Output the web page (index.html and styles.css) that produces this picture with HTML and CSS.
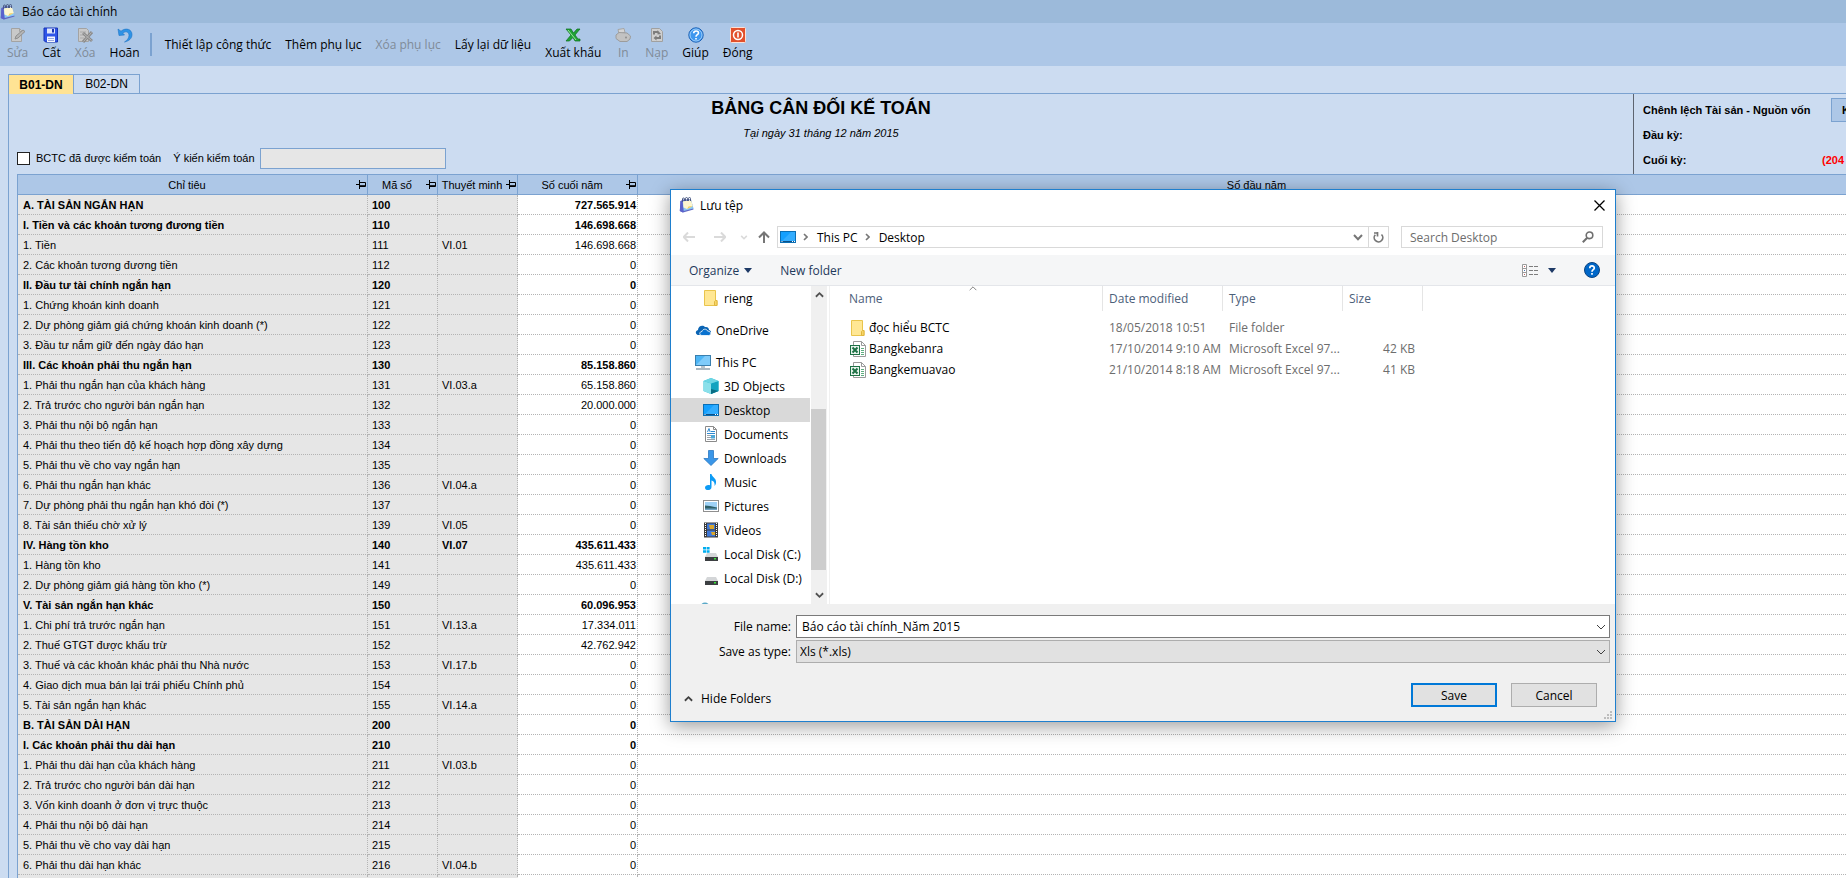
FILE: index.html
```html
<!DOCTYPE html>
<html lang="vi">
<head>
  <meta charset="UTF-8">
  <meta name="viewport" content="width=device-width, initial-scale=1.0">
  <title>Báo cáo tài chính</title>
  <link rel="stylesheet" href="styles.css">
</head>
<body>
  <!-- shared icons -->
  <svg class="sprite" aria-hidden="true">
    <symbol id="i-app" viewBox="0 0 16 16">
      <path d="M1.500 4 4 2.500 12 2.500 14.500 12.500 4 15.500 .8 14z" fill="#5f66c4"/>
      <path d="M3.500 4.500 12 3 14.500 11.500 4.500 14z" fill="#8cc8f2"/>
      <path d="M4 4.500 12 3 13.800 9 8 12 4.500 10.500z" fill="#fdf6cf"/>
      <path d="M9.500 9.500 13.800 9 8 12z" fill="#f3cf55"/>
      <path d="M1.500 4 3.500 4.500 4.500 14 4 15.500 .8 14z" fill="#5a62cc"/>
      <path d="M3.500 5V2a1 1 0 0 1 2 0V4M6.500 4V1.500a1 1 0 0 1 2 0V4M9.500 4V1.500a1 1 0 0 1 2 0V4" fill="none" stroke="#4b5b84"/>
    </symbol>
    <symbol id="i-pin" viewBox="0 0 10 9">
      <path d="M0 4.500h3M3.500 0v9M4 2.500h5.500v4H4M4 5.700h5" fill="none" stroke="#000"/>
    </symbol>
    <symbol id="i-folder" viewBox="0 0 14 16">
      <path d="M.5 .5h11v10h1.500v5H.5z" fill="#ffe794" stroke="#e9c44c"/>
      <path d="M10.500 15.500v-4l1-1h1.500v5z" fill="#f7d667" stroke="#e0b63e"/>
    </symbol>
    <symbol id="i-desktop" viewBox="0 0 16 12">
      <rect x=".5" y=".5" width="15" height="11" fill="#14a0ff" stroke="#0b6fb5"/>
      <path d="M1 11 11 1h4v9H1z" fill="#33adff"/>
      <path d="M1 10.500h14" stroke="#0b4f86"/>
      <path d="M1.500 10.500h1M12 10.500h1M14 10.500h1" stroke="#fff"/>
    </symbol>
    <symbol id="i-excel" viewBox="0 0 16 16">
      <path d="M3.500 .5h8l4 4v11h-12z" fill="#fff" stroke="#9a9a9a"/>
      <path d="M11.500 .5v4h4" fill="none" stroke="#9a9a9a"/>
      <path d="M11 7.500h3M11 9.500h3M11 11.500h3M11 13.500h3" stroke="#5fae80"/>
      <rect x=".5" y="4.500" width="9" height="9" fill="#e9f4ed" stroke="#1e7145"/>
      <path d="M2.500 6.500 7.500 11.500M7.500 6.500 2.500 11.500" stroke="#1e7145" stroke-width="2"/>
    </symbol>
    <symbol id="i-chevron" viewBox="0 0 10 6">
      <path d="M1 1 5 5 9 1" fill="none" stroke="currentColor"/>
    </symbol>
    <symbol id="i-arrow" viewBox="0 0 12 10">
      <path d="M0.500 5H12M5 .5.7 5 5 9.500" fill="none" stroke="currentColor" stroke-width="2"/>
    </symbol>
    <symbol id="i-disk" viewBox="0 0 16 16">
      <path d="M4 7h9l2 4H2z" fill="#d4d6d8"/>
      <rect x="2" y="11" width="13" height="4" fill="#3c3f42"/>
      <rect x="11" y="12" width="2" height="1.500" fill="#39e639"/>
    </symbol>
  </svg>

  <div class="app">
    <header class="titlebar">
      <svg class="icon16"><use href="#i-app"/></svg>
      <h1>Báo cáo tài chính</h1>
    </header>

    <div class="toolbar">
      <button class="tool" disabled>
        <svg viewBox="0 0 16 16"><path d="M1.500 1.500h8l2 2v11h-10z" fill="#c9c9c9" stroke="#a3a3a3"/><path d="M9.500 1.500v3h3" fill="none" stroke="#a3a3a3"/><path d="M5 12l1-3 7-6 2 1.500-7 6.500z" fill="#b4b4b4" stroke="#8f8f8f"/></svg>
        Sửa
      </button>
      <button class="tool">
        <svg viewBox="0 0 16 16"><path d="M1 1h13.500v14H2.500L1 13.500z" fill="#2f55e8" stroke="#1733b4"/><path d="M4 1.500h8v5H4z" fill="#dfe6fb"/><path d="M9 2h2v3.500H9z" fill="#1733b4"/><path d="M4 9.500h8V15H4z" fill="#f4f6fd"/><path d="M5 11.500h6M5 13.500h6" stroke="#9aa9dd"/></svg>
        Cất
      </button>
      <button class="tool" disabled>
        <svg viewBox="0 0 16 16"><path d="M1.500 1.500h8l2 2v11h-10z" fill="#c9c9c9" stroke="#a3a3a3"/><path d="M3 5h6M3 8h5M3 11h4" stroke="#a9a9a9"/><path d="M6 6 15 14M15 5 6 15" stroke="#8a8a8a" stroke-width="3"/><path d="M6.500 6.500 14.500 13.500M14.500 5.500 6.500 14.500" stroke="#b5b5b5"/></svg>
        Xóa
      </button>
      <button class="tool">
        <svg viewBox="0 0 16 16"><path d="M1 2 2 8.500 7.500 8 5.800 6.200C9 3.500 12 5 12 8.500 12 11 10 13.500 7.500 15 12 14 15 11.500 15 7.500 15 2.500 9 0 4 4.200z" fill="#2f93e6" stroke="#1f74c4" stroke-width=".6"/></svg>
        Hoãn
      </button>
      <span class="tool-sep"></span>
      <button class="tool">Thiết lập công thức</button>
      <button class="tool">Thêm phụ lục</button>
      <button class="tool" disabled>Xóa phụ lục</button>
      <button class="tool">Lấy lại dữ liệu</button>
      <button class="tool">
        <svg viewBox="0 0 16 16"><path d="M1 2h5l2.500 4L12 2h3l-5 6 3 4h2v2h-5L8 10.500 4.500 14H1l5-6z" fill="#1fa336" stroke="#0d6f1e" stroke-width=".7"/><path d="M3 3l8 10" stroke="#9be59b"/></svg>
        Xuất khẩu
      </button>
      <button class="tool" disabled>
        <svg viewBox="0 0 16 16"><path d="M3 2.500 9 1.500l1 4-6 1.500z" fill="#d4d4d4" stroke="#a5a5a5"/><path d="M1 8l3-2.500 8 .5 3.500 3-.5 3-3 2.500H5L1 11.500z" fill="#c2c2c2" stroke="#9c9c9c"/><circle cx="11" cy="10.500" r="1" fill="#8e8e8e"/></svg>
        In
      </button>
      <button class="tool" disabled>
        <svg viewBox="0 0 16 16"><path d="M2.500 1.500h8l3 3v10h-11z" fill="#cfcfcf" stroke="#a0a0a0"/><path d="M5 7.500V5h4M11 8.500V11H7" fill="none" stroke="#7d7d7d" stroke-width="2"/><path d="M8.500 3v4.500L12 7zM7.500 8.500v5L4.500 11z" fill="#7d7d7d"/></svg>
        Nạp
      </button>
      <button class="tool">
        <svg viewBox="0 0 16 16"><circle cx="8" cy="8" r="7.200" fill="#3f97ee" stroke="#1d62b6"/><circle cx="8" cy="8" r="6" fill="none" stroke="#b4dafc" stroke-width=".8"/><path d="M5.700 6.300c0-3.200 4.800-3 4.800-.3C10.500 7.700 8 7.700 8 9.700M8 11v1.600" fill="none" stroke="#fff" stroke-width="1.600"/></svg>
        Giúp
      </button>
      <button class="tool">
        <svg viewBox="0 0 16 16"><rect x=".5" y=".5" width="15" height="15" rx="1" fill="#e2502c" stroke="#fbe0d6"/><circle cx="8" cy="8" r="4.500" fill="none" stroke="#fff" stroke-width="1.500"/><path d="M8 5.500v5" stroke="#fff" stroke-width="1.600"/></svg>
        Đóng
      </button>
    </div>

    <div class="tabs">
      <button class="tab active">B01-DN</button>
      <button class="tab">B02-DN</button>
    </div>

    <main class="panel">
      <section class="report-head">
        <div class="report-main">
          <h2>BẢNG CÂN ĐỐI KẾ TOÁN</h2>
          <p class="report-date">Tại ngày 31 tháng 12 năm 2015</p>
          <div class="audit">
            <input type="checkbox" id="audited">
            <label for="audited" class="audit-check">BCTC đã được kiểm toán</label>
            <label for="opinion">Ý kiến kiểm toán</label>
            <input type="text" id="opinion" class="opinion">
          </div>
        </div>
        <div class="balance">
          <div class="balance-row"><span>Chênh lệch Tài sản - Nguồn vốn</span><button class="check-btn">K</button></div>
          <div class="balance-row"><span>Đầu kỳ:</span></div>
          <div class="balance-row"><span>Cuối kỳ:</span><span class="negative">(204</span></div>
        </div>
      </section>

      <table class="grid">
        <colgroup><col class="c-name"><col class="c-code"><col class="c-note"><col class="c-end"><col></colgroup>
        <thead>
          <tr>
            <th><div class="th"><span>Chỉ tiêu</span><svg class="pin"><use href="#i-pin"/></svg></div></th>
            <th><div class="th"><span>Mã số</span><svg class="pin"><use href="#i-pin"/></svg></div></th>
            <th><div class="th"><span>Thuyết minh</span><svg class="pin"><use href="#i-pin"/></svg></div></th>
            <th><div class="th"><span>Số cuối năm</span><svg class="pin"><use href="#i-pin"/></svg></div></th>
            <th>Số đầu năm</th>
          </tr>
        </thead>
        <tbody>
          <tr class="group"><td>A. TÀI SẢN NGẮN HẠN</td><td>100</td><td></td><td>727.565.914</td><td></td></tr>
          <tr class="group"><td>I. Tiền và các khoản tương đương tiền</td><td>110</td><td></td><td>146.698.668</td><td></td></tr>
          <tr><td>1. Tiền</td><td>111</td><td>VI.01</td><td>146.698.668</td><td></td></tr>
          <tr><td>2. Các khoản tương đương tiền</td><td>112</td><td></td><td>0</td><td></td></tr>
          <tr class="group"><td>II. Đầu tư tài chính ngắn hạn</td><td>120</td><td></td><td>0</td><td></td></tr>
          <tr><td>1. Chứng khoán kinh doanh</td><td>121</td><td></td><td>0</td><td></td></tr>
          <tr><td>2. Dự phòng giảm giá chứng khoán kinh doanh (*)</td><td>122</td><td></td><td>0</td><td></td></tr>
          <tr><td>3. Đầu tư nắm giữ đến ngày đáo hạn</td><td>123</td><td></td><td>0</td><td></td></tr>
          <tr class="group"><td>III. Các khoản phải thu ngắn hạn</td><td>130</td><td></td><td>85.158.860</td><td></td></tr>
          <tr><td>1. Phải thu ngắn hạn của khách hàng</td><td>131</td><td>VI.03.a</td><td>65.158.860</td><td></td></tr>
          <tr><td>2. Trả trước cho người bán ngắn hạn</td><td>132</td><td></td><td>20.000.000</td><td></td></tr>
          <tr><td>3. Phải thu nội bộ ngắn hạn</td><td>133</td><td></td><td>0</td><td></td></tr>
          <tr><td>4. Phải thu theo tiến độ kế hoạch hợp đồng xây dựng</td><td>134</td><td></td><td>0</td><td></td></tr>
          <tr><td>5. Phải thu về cho vay ngắn hạn</td><td>135</td><td></td><td>0</td><td></td></tr>
          <tr><td>6. Phải thu ngắn hạn khác</td><td>136</td><td>VI.04.a</td><td>0</td><td></td></tr>
          <tr><td>7. Dự phòng phải thu ngắn hạn khó đòi (*)</td><td>137</td><td></td><td>0</td><td></td></tr>
          <tr><td>8. Tài sản thiếu chờ xử lý</td><td>139</td><td>VI.05</td><td>0</td><td></td></tr>
          <tr class="group"><td>IV. Hàng tồn kho</td><td>140</td><td>VI.07</td><td>435.611.433</td><td></td></tr>
          <tr><td>1. Hàng tồn kho</td><td>141</td><td></td><td>435.611.433</td><td></td></tr>
          <tr><td>2. Dự phòng giảm giá hàng tồn kho (*)</td><td>149</td><td></td><td>0</td><td></td></tr>
          <tr class="group"><td>V. Tài sản ngắn hạn khác</td><td>150</td><td></td><td>60.096.953</td><td></td></tr>
          <tr><td>1. Chi phí trả trước ngắn hạn</td><td>151</td><td>VI.13.a</td><td>17.334.011</td><td></td></tr>
          <tr><td>2. Thuế GTGT được khấu trừ</td><td>152</td><td></td><td>42.762.942</td><td></td></tr>
          <tr><td>3. Thuế và các khoản khác phải thu Nhà nước</td><td>153</td><td>VI.17.b</td><td>0</td><td></td></tr>
          <tr><td>4. Giao dịch mua bán lại trái phiếu Chính phủ</td><td>154</td><td></td><td>0</td><td></td></tr>
          <tr><td>5. Tài sản ngắn hạn khác</td><td>155</td><td>VI.14.a</td><td>0</td><td></td></tr>
          <tr class="group"><td>B. TÀI SẢN DÀI HẠN</td><td>200</td><td></td><td>0</td><td></td></tr>
          <tr class="group"><td>I. Các khoản phải thu dài hạn</td><td>210</td><td></td><td>0</td><td></td></tr>
          <tr><td>1. Phải thu dài hạn của khách hàng</td><td>211</td><td>VI.03.b</td><td>0</td><td></td></tr>
          <tr><td>2. Trả trước cho người bán dài hạn</td><td>212</td><td></td><td>0</td><td></td></tr>
          <tr><td>3. Vốn kinh doanh ở đơn vị trực thuộc</td><td>213</td><td></td><td>0</td><td></td></tr>
          <tr><td>4. Phải thu nội bộ dài hạn</td><td>214</td><td></td><td>0</td><td></td></tr>
          <tr><td>5. Phải thu về cho vay dài hạn</td><td>215</td><td></td><td>0</td><td></td></tr>
          <tr><td>6. Phải thu dài hạn khác</td><td>216</td><td>VI.04.b</td><td>0</td><td></td></tr>
          <tr><td></td><td></td><td></td><td></td><td></td></tr>
        </tbody>
      </table>
    </main>
  </div>

  <div class="dialog" role="dialog" aria-labelledby="dialogTitle">
    <div class="dialog-title">
      <svg class="icon16"><use href="#i-app"/></svg>
      <h2 id="dialogTitle">Lưu tệp</h2>
      <button class="close" aria-label="Close"><svg viewBox="0 0 11 11"><path d="M.5.5l10 10M10.500.5l-10 10" stroke="#000" stroke-width="1.300" fill="none"/></svg></button>
    </div>

    <div class="nav">
      <div class="nav-buttons">
        <button class="nav-btn dim" aria-label="Back"><svg class="arrow"><use href="#i-arrow"/></svg></button>
        <button class="nav-btn dim" aria-label="Forward"><svg class="arrow flip"><use href="#i-arrow"/></svg></button>
        <button class="nav-btn dim" aria-label="Recent"><svg viewBox="0 0 10 6" class="recent"><path d="M1.500 1 5 4.500 8.500 1" fill="none" stroke="currentColor" stroke-width="2"/></svg></button>
        <button class="nav-btn" aria-label="Up"><svg viewBox="0 0 12 12"><path d="M6 12V1.500M1 6.500 6 1.500l5 5" fill="none" stroke="#767676" stroke-width="2"/></svg></button>
      </div>
      <div class="address">
        <svg class="desktop"><use href="#i-desktop"/></svg>
        <svg class="crumb" viewBox="0 0 5 8"><path d="M1 1l3 3-3 3" fill="none" stroke="#777" stroke-width="1.600"/></svg>
        <a href="#">This PC</a>
        <svg class="crumb" viewBox="0 0 5 8"><path d="M1 1l3 3-3 3" fill="none" stroke="#777" stroke-width="1.600"/></svg>
        <a href="#">Desktop</a>
        <button class="addr-btn addr-drop" aria-label="Previous locations"><svg viewBox="0 0 10 7"><path d="M1 1 5 5.200 9 1" fill="none" stroke="#767676" stroke-width="2"/></svg></button>
        <button class="addr-btn refresh" aria-label="Refresh"><svg viewBox="0 0 11 11"><path d="M8.500 2.500A4.300 4.300 0 1 1 2.300 2.700" fill="none" stroke="#767676" stroke-width="1.700"/><path d="M4.500 0v4.500M4.800 1H1" fill="none" stroke="#767676" stroke-width="1.700"/></svg></button>
      </div>
      <div class="search">
        <input type="text" placeholder="Search Desktop" aria-label="Search Desktop">
        <svg viewBox="0 0 12 12"><circle cx="7.500" cy="4.300" r="3.300" fill="none" stroke="#6f6f6f" stroke-width="1.600"/><path d="M5.200 6.800.8 11.200" stroke="#6f6f6f" stroke-width="2"/></svg>
      </div>
    </div>

    <div class="commands">
      <button>Organize <svg class="caret" viewBox="0 0 8 5"><path d="M0 0h8L4 5z" fill="#1e3a66"/></svg></button>
      <button>New folder</button>
      <button class="view" aria-label="View"><svg class="view-icon" viewBox="0 0 17 13"><path d="M.5.5h4v12h-4zM.5 4.500h4M.5 8.500h4" fill="#fff" stroke="#9a9a9a"/><path d="M7 2.500h4M12 2.500h4M7 6.500h4M12 6.500h4M7 10.500h4M12 10.500h4" stroke="#7d7d7d"/><path d="M2 2.500h1M2 10.500h1" stroke="#c06060"/><path d="M2 6.500h1" stroke="#4a78b8"/></svg><svg class="caret" viewBox="0 0 8 5"><path d="M0 0h8L4 5z" fill="#1e3a66"/></svg></button>
      <button class="help" aria-label="Help"><svg viewBox="0 0 16 16"><circle cx="8" cy="8" r="7.500" fill="#0067c8" stroke="#0b4380"/><path d="M5.800 6.200c0-3 4.500-2.900 4.500-.2C10.300 7.700 8 7.700 8 9.700M8 11v1.700" fill="none" stroke="#fff" stroke-width="1.700"/></svg></button>
    </div>

    <div class="browser">
      <ul class="tree">
        <li class="child"><svg viewBox="0 0 14 16"><use href="#i-folder"/></svg>rieng</li>
        <li class="root"><svg viewBox="0 0 16 16"><path d="M4 13C.5 13-.5 9 3 8c0-4 5-5.500 7-3 3-.5 4 1.500 4 3 3 .5 2.500 5 0 5z" fill="#0a64b4"/><path d="M7 13.500c-3 0-3-4 0-4 .5-3 5-3 5.500-.5 4 0 4 4.500 1 4.500z" fill="#0a72cf" stroke="#fff" stroke-width=".8"/></svg>OneDrive</li>
        <li class="root"><svg viewBox="0 0 16 16"><rect x=".5" y="1.500" width="15" height="10" fill="#4db5f5" stroke="#3a7fae"/><path d="M1 11 10 2h5v9z" fill="#7fcbfa"/><path d="M6 12h4v2H6z" fill="#b9c3cb"/><path d="M1 15h14" stroke="#8fa0ad" stroke-width="1.500"/></svg>This PC</li>
        <li class="child"><svg viewBox="0 0 16 16"><path d="M8 0l7.500 3v10L8 16 .5 13V3z" fill="#2fc0d6"/><path d="M.5 3 8 5.500V16L.5 13z" fill="#8be0ea"/><path d="M8 5.500 15.500 3v10L8 16z" fill="#12a3bf"/><path d="M8 11l7.500 2L8 16z" fill="#0a6d84"/><path d="M8 0l7.500 3L8 5.500.5 3z" fill="#6fd6e4"/></svg>3D Objects</li>
        <li class="child selected"><svg viewBox="0 0 16 12"><use href="#i-desktop"/></svg>Desktop</li>
        <li class="child"><svg viewBox="0 0 16 16"><path d="M2.500.5h8l3 3v12h-11z" fill="#fff" stroke="#8a8a8a"/><path d="M10.500.5v3h3" fill="none" stroke="#8a8a8a"/><path d="M4.500 6 6 2.500 7.200 6M4 7.500h8M8 5.500h4" fill="none" stroke="#2f88cf"/><path d="M4 9.500h4M4 11.500h4M4 13.500h8" stroke="#9aa4ac"/><path d="M8 9h4v3.500H8z" fill="#4da7d8"/></svg>Documents</li>
        <li class="child"><svg viewBox="0 0 16 16"><path d="M5.500.5h5v8h4.700L8 15.500.8 8.500h4.700z" fill="#3a96e8" stroke="#2b78c2" stroke-width=".8"/></svg>Downloads</li>
        <li class="child"><svg viewBox="0 0 16 16"><path d="M7 0h1.500c.3 3 5 4 4.500 8.500 0 1.500-.7 2.500-1.500 3.500.5-3.500-.8-5-3-5.500V13c0 4-6.500 4-6.500.8C2 11 5 10.500 7 11.200z" fill="#0d9bf5"/></svg>Music</li>
        <li class="child"><svg viewBox="0 0 16 16"><rect x=".5" y="2.500" width="15" height="11" fill="#fff" stroke="#8f8f8f"/><path d="M2 4h12v8H2z" fill="#9fd2f6"/><path d="M2 7.500 7 8l7 1.500V12H2z" fill="#2e6069"/><path d="M2 10.500h12V12H2z" fill="#6fa3c4"/></svg>Pictures</li>
        <li class="child"><svg viewBox="0 0 16 16"><rect x="1" y=".5" width="14" height="15" fill="#3b3b3b"/><path d="M4 1.500h8v6H4zM4 8.500h8v6H4z" fill="#3f78d8"/><path d="M6 3h5v4H7zM8 10h4v3H9z" fill="#d9a62c"/><path d="M2.500 1v14M13.500 1v14" stroke="#fff" stroke-dasharray="1 1"/></svg>Videos</li>
        <li class="child"><svg viewBox="0 0 16 16"><use href="#i-disk"/><path d="M0 1h3v2.500H0zM3.600 1h3v2.500h-3zM0 4.200h3v2.500H0zM3.600 4.200h3v2.500h-3z" fill="#00adef"/></svg>Local Disk (C:)</li>
        <li class="child"><svg viewBox="0 0 16 16"><use href="#i-disk"/></svg>Local Disk (D:)</li>
        <li class="root"><svg viewBox="0 0 16 16"><circle cx="10" cy="5" r="4.500" fill="#5aa9c8"/></svg></li>
      </ul>
      <div class="scrollbar">
        <svg viewBox="0 0 10 7"><path d="M1 6 5 2 9 6" fill="none" stroke="#505050" stroke-width="2"/></svg>
        <div class="thumb"></div>
        <svg viewBox="0 0 10 7"><path d="M1 1 5 5 9 1" fill="none" stroke="#505050" stroke-width="2"/></svg>
      </div>
      <div class="files">
        <svg class="sort flip"><use href="#i-chevron"/></svg>
        <table>
          <colgroup><col class="f-name"><col class="f-date"><col class="f-type"><col class="f-size"></colgroup>
          <thead><tr><th>Name</th><th>Date modified</th><th>Type</th><th>Size</th></tr></thead>
          <tbody>
            <tr><td><div class="file"><svg><use href="#i-folder"/></svg>đọc hiểu BCTC</div></td><td>18/05/2018 10:51</td><td>File folder</td><td></td></tr>
            <tr><td><div class="file"><svg><use href="#i-excel"/></svg>Bangkebanra</div></td><td>17/10/2014 9:10 AM</td><td>Microsoft Excel 97...</td><td>42 KB</td></tr>
            <tr><td><div class="file"><svg><use href="#i-excel"/></svg>Bangkemuavao</div></td><td>21/10/2014 8:18 AM</td><td>Microsoft Excel 97...</td><td>41 KB</td></tr>
          </tbody>
        </table>
      </div>
    </div>

    <div class="dialog-foot">
      <div class="field">
        <label for="fileName">File name:</label>
        <div class="combo">
          <input type="text" id="fileName" value="Báo cáo tài chính_Năm 2015">
          <svg><use href="#i-chevron"/></svg>
        </div>
      </div>
      <div class="field">
        <label for="fileType">Save as type:</label>
        <div class="combo">
          <select id="fileType"><option>Xls (*.xls)</option></select>
          <svg><use href="#i-chevron"/></svg>
        </div>
      </div>
      <div class="actions">
        <button class="hide-folders"><svg viewBox="0 0 10 7"><path d="M1 6 5 2 9 6" fill="none" stroke="#404040" stroke-width="2"/></svg>Hide Folders</button>
        <button class="btn primary">Save</button>
        <button class="btn">Cancel</button>
      </div>
    </div>
    <svg class="grip" viewBox="0 0 8 8"><path d="M6 0h2v2H6zM3 3h2v2H3zM6 3h2v2H6zM0 6h2v2H0zM3 6h2v2H3zM6 6h2v2H6z" fill="#bdbdbd"/></svg>
  </div>
</body>
</html>
```
FILE: styles.css
```css
* {
  box-sizing: border-box;
}
body {
  margin: 0;
  height: 100vh;
  overflow: hidden;
  position: relative;
  background: #ccdcf1;
  color: #000;
  font-family: "Open Sans", "Noto Sans", sans-serif;
  font-size: 12px;
}
h1, h2, p, ul {
  margin: 0;
  padding: 0;
  font-size: 12px;
  font-weight: normal;
}
button, input, select {
  font: inherit;
  color: inherit;
  padding: 0;
  margin: 0;
  border: none;
  background: none;
}
svg {
  display: block;
  flex: none;
}
.sprite {
  position: absolute;
  width: 0;
  height: 0;
}
.icon16 {
  width: 16px;
  height: 16px;
}
.flip {
  transform: rotate(180deg);
}

/* main window, its right edge runs off the screen */
.app {
  margin-right: -30px;
}
.titlebar {
  display: flex;
  align-items: center;
  gap: 6px;
  height: 23px;
  background: #9cbada;
}
.toolbar {
  display: flex;
  align-items: center;
  height: 43px;
  background: #adc7e7;
}
.tool {
  display: flex;
  flex-direction: column;
  align-items: center;
  padding: 0 7px;
  line-height: 20px;
  white-space: nowrap;
}
.tool svg {
  width: 16px;
  height: 16px;
}
.tool:disabled {
  color: #808b98;
}
.tool-sep {
  width: 2px;
  height: 23px;
  margin: 0 6px 0 3px;
  background: #7ba2d0;
}

.tabs {
  display: flex;
  padding: 8px 0 0 8px;
  margin-bottom: -1px;
  position: relative;
}
.tab {
  height: 20px;
  min-width: 66px;
  border: 1px solid #7ba2d0;
  border-left: none;
  line-height: 18px;
  font-family: "Liberation Sans", sans-serif;
}
.tab.active {
  border-left: 1px solid #7ba2d0;
  border-bottom: none;
  background: #ffe394;
  font-weight: bold;
}
.panel {
  margin-left: 8px;
  padding-left: 8px;
  border-left: 1px solid #7ba2d0;
  border-top: 1px solid #7ba2d0;
  font-family: "Liberation Sans", sans-serif;
  font-size: 11px;
}
.report-head {
  display: flex;
  height: 80px;
}
.report-main {
  flex: 1;
  padding-right: 8px;
  text-align: center;
}
.report-main h2 {
  font-size: 18px;
  line-height: 28px;
  font-weight: bold;
}
.report-date {
  font-size: 11px;
  font-style: italic;
  line-height: 22px;
}
.audit {
  display: flex;
  align-items: center;
  height: 22px;
  margin-top: 3px;
}
.audit input[type="checkbox"] {
  appearance: none;
  width: 13px;
  height: 13px;
  margin-right: 6px;
  border: 1px solid #222;
  background: #fff;
}
.audit-check {
  margin-right: 12px;
}
.opinion {
  width: 186px;
  height: 21px;
  margin-left: 5px;
  border: 1px solid #7ba2d0;
  background: #e6e6e6;
}
.balance {
  width: 243px;
  padding: 3px 0 0 9px;
  border-left: 1px solid #5d6470;
  font-weight: bold;
}
.balance-row {
  display: flex;
  align-items: center;
  height: 25px;
}
.balance-row span:first-child {
  flex: 1;
}
.check-btn {
  width: 45px;
  height: 24px;
  padding-left: 10px;
  border: 1px solid #7ba2d0;
  background: #adc7e7;
  text-align: left;
}
.negative {
  width: 54px;
  color: #f00;
}

.grid {
  width: 100%;
  table-layout: fixed;
  border-spacing: 0;
  border-left: 1px solid #7ba2d0;
}
.c-name { width: 350px; }
.c-code { width: 70px; }
.c-note { width: 80px; }
.c-end { width: 120px; }
.grid th {
  height: 21px;
  padding: 0;
  border: 1px solid #7ba2d0;
  border-left: none;
  background: #adc7e7;
  font-weight: normal;
}
.th {
  display: flex;
  align-items: center;
}
.th span {
  flex: 1;
}
.pin {
  width: 10px;
  height: 9px;
  margin-right: 1px;
}
.grid td {
  height: 20px;
  padding: 0 4px;
  border-right: 1px dotted #b4b4b4;
  border-bottom: 1px dotted #b4b4b4;
  background: #e6e6e6;
  white-space: nowrap;
}
.grid td:first-child {
  padding-left: 5px;
}
.grid td:nth-child(n+4) {
  background: #fff;
}
.grid td:nth-child(4) {
  padding-right: 1px;
  text-align: right;
}
.group td {
  font-weight: bold;
}

/* save dialog */
.dialog {
  position: absolute;
  left: 670px;
  top: 189px;
  width: 946px;
  border: 1px solid #1e7fce;
  background: #fff;
  box-shadow: 0 4px 18px rgba(0, 0, 0, 0.4);
}
.dialog-title {
  display: flex;
  align-items: center;
  gap: 5px;
  height: 30px;
  padding: 0 10px 0 8px;
}
.close {
  margin-left: auto;
}
.close svg {
  width: 11px;
  height: 11px;
}
.nav {
  display: flex;
  padding: 6px 12px 7px 12px;
}
.nav-buttons {
  display: grid;
  grid-template-columns: 31px 26px 18px 19px;
  align-items: center;
  justify-items: start;
}
.nav-btn svg {
  width: 12px;
  height: 12px;
}
.nav-btn .arrow {
  height: 10px;
}
.nav-btn.dim {
  color: #dadada;
}
.nav-btn .recent {
  width: 8px;
  height: 5px;
}
.address {
  display: flex;
  align-items: center;
  flex: 1;
  height: 22px;
  border: 1px solid #d9d9d9;
}
.address a {
  color: #000;
  text-decoration: none;
}
.desktop {
  width: 16px;
  height: 12px;
  margin-left: 2px;
}
.crumb {
  width: 5px;
  height: 8px;
  margin: 0 9px 0 7px;
}
.addr-btn {
  display: flex;
  align-items: center;
  justify-content: center;
  width: 20px;
  height: 20px;
}
.addr-btn svg {
  width: 11px;
  height: 11px;
}
.addr-drop {
  margin-left: auto;
}
.addr-drop svg {
  width: 10px;
  height: 7px;
}
.refresh {
  border-left: 1px solid #d9d9d9;
}
.search {
  display: flex;
  align-items: center;
  width: 202px;
  height: 22px;
  margin-left: 12px;
  padding: 0 8px;
  border: 1px solid #d9d9d9;
}
.search input {
  flex: 1;
  min-width: 0;
  outline: none;
}
.search input::placeholder {
  color: #6d6d6d;
}
.search svg {
  width: 12px;
  height: 12px;
}
.commands {
  display: flex;
  align-items: center;
  height: 31px;
  padding: 0 15px 0 18px;
  border-bottom: 1px solid #e4e6ea;
  background: #f5f6f7;
  color: #1e395b;
}
.commands button {
  display: flex;
  align-items: center;
  gap: 5px;
  margin-right: 28px;
}
.caret {
  width: 8px;
  height: 5px;
}
.commands .view {
  gap: 9px;
  margin-left: auto;
}
.view-icon {
  width: 17px;
  height: 13px;
}
.commands .help {
  margin-right: 0;
}
.help svg {
  width: 16px;
  height: 16px;
}

.browser {
  display: flex;
  height: 318px;
}
.tree {
  width: 140px;
  overflow: hidden;
  list-style: none;
}
.tree li {
  display: flex;
  align-items: center;
  gap: 5px;
  height: 24px;
  margin-right: 1px;
  padding-left: 32px;
  white-space: nowrap;
}
.tree svg {
  width: 16px;
  height: 16px;
}
.tree .root {
  margin-top: 8px;
  padding-left: 24px;
}
.tree .selected {
  background: #d9d9d9;
}
.scrollbar {
  display: flex;
  flex-direction: column;
  align-items: center;
  width: 16px;
  padding: 5px 0;
  background: #f0f0f0;
}
.scrollbar svg {
  width: 9px;
  height: 7px;
}
.thumb {
  width: 15px;
  height: 161px;
  margin: 111px 1px auto 0;
  background: #cdcdcd;
}
.files {
  position: relative;
  flex: 1;
  margin-left: 2px;
  padding-left: 13px;
  border-left: 1px solid #f0f0f0;
}
.sort {
  position: absolute;
  left: 138px;
  top: 0;
  width: 10px;
  height: 5px;
  color: #6d6d6d;
}
.files table {
  table-layout: fixed;
  width: 580px;
  border-spacing: 0;
}
.f-name { width: 260px; }
.f-date { width: 120px; }
.f-type { width: 120px; }
.f-size { width: 80px; }
.files th {
  height: 25px;
  padding: 0 6px;
  border-right: 1px solid #e5e5e5;
  color: #4c607a;
  font-weight: normal;
  text-align: left;
}
.files tbody::before {
  content: "";
  display: block;
  height: 6px;
}
.files td {
  height: 21px;
  padding: 0 6px;
  color: #6d6d6d;
  white-space: nowrap;
}
.files td:last-child {
  padding-right: 8px;
  text-align: right;
}
.file {
  display: flex;
  align-items: center;
  gap: 3px;
  color: #000;
}
.file svg {
  width: 16px;
  height: 16px;
  margin-left: 1px;
}

.dialog-foot {
  height: 117px;
  padding: 11px 5px 0 0;
  background: #f0f0f0;
}
.field {
  display: flex;
  align-items: center;
  margin-bottom: 2px;
}
.field label {
  width: 120px;
  margin-right: 5px;
  text-align: right;
}
.combo {
  position: relative;
  flex: 1;
}
.combo input, .combo select {
  display: block;
  width: 100%;
  height: 23px;
  appearance: none;
  border: 1px solid #7a7a7a;
  background: #fff;
  padding: 0 5px;
}
.combo select {
  border-color: #adadad;
  background: #e1e1e1;
  padding: 0 3px;
}
.combo svg {
  position: absolute;
  right: 4px;
  top: 9px;
  width: 10px;
  height: 6px;
  color: #404040;
}
.actions {
  display: flex;
  align-items: center;
  gap: 14px;
  margin-top: 20px;
  padding: 0 13px;
}
.hide-folders {
  display: flex;
  align-items: center;
  gap: 8px;
  margin-right: auto;
  margin-top: 6px;
}
.hide-folders svg {
  width: 9px;
  height: 7px;
}
.btn {
  width: 86px;
  height: 24px;
  border: 1px solid #adadad;
  background: #e1e1e1;
}
.btn.primary {
  border: 2px solid #0078d7;
}
.grip {
  position: absolute;
  right: 3px;
  bottom: 2px;
  width: 8px;
  height: 8px;
}
```
